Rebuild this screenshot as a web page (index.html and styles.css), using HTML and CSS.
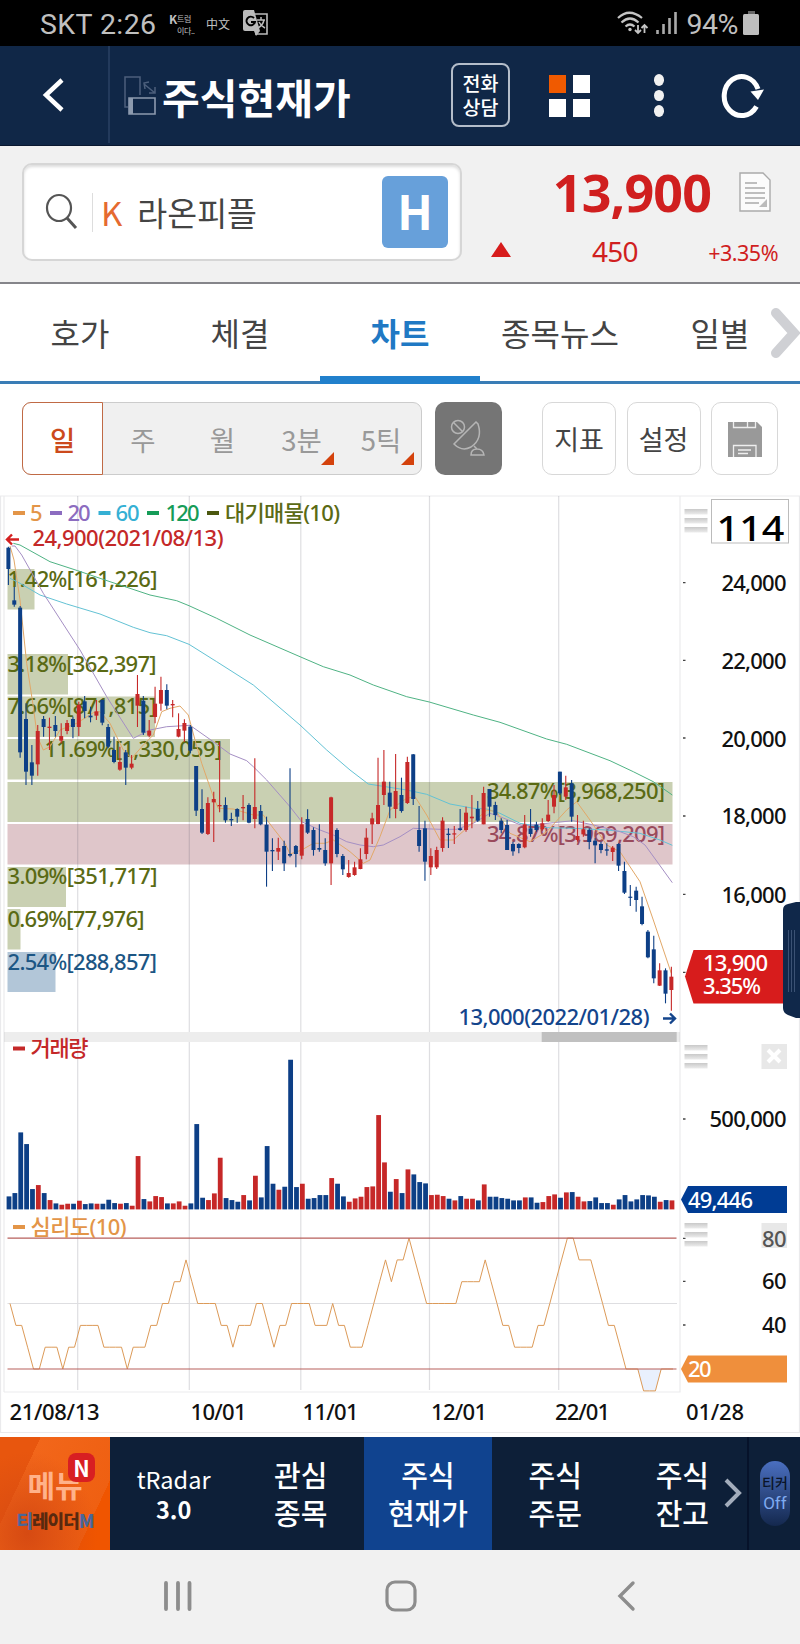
FILE: index.html
```html
<!DOCTYPE html>
<html lang="ko">
<head>
  <meta charset="UTF-8" />
  <meta name="viewport" content="width=device-width, initial-scale=1.0"/>
  <title>주식현재가</title>
  <link rel="stylesheet" href="styles.css">
</head>
<body>
  <div class="status-bar">
    <span class="carrier">SKT 2:26</span>
    <span class="app-mark"><b>K</b><i>트럼<br>이다..</i></span>
    <span class="cn-mark">中文</span>
    <svg class="translate" width="26" height="26" viewBox="0 0 26 26">
      <path d="M12 4h12v20H12" fill="none" stroke="#bbb" stroke-width="1.6"/>
      <path d="M2 0h9l6 21H2a2 2 0 0 1-2-2V2a2 2 0 0 1 2-2z" fill="#bbb"/>
      <path d="M11 21h6l-4 5z" fill="#bbb"/>
      <path d="M11 8a4.3 4.3 0 1 0 1 4H8" fill="none" stroke="#000" stroke-width="1.9"/>
      <path d="M14 10h8M18 7v3M21 10q-1 5-6 8M16 12q2 4 6 6" fill="none" stroke="#bbb" stroke-width="1.5"/>
    </svg>
    <svg class="wifi" width="32" height="25" viewBox="0 0 32 25">
      <g fill="none" stroke="#c4c4c4" stroke-width="2.2">
        <path d="M1 7q11-10.500 24 0"/><path d="M4.500 11.500q8.500-8 17 0"/><path d="M8.500 15.500q4.500-4 9 0"/>
        <path d="M21 14v8m-3-3 3 3 3-3M27.500 22v-8m-3 3 3-3 3 3" stroke-width="1.8"/>
      </g>
      <circle cx="13" cy="18.500" r="1.700" fill="#c4c4c4"/>
    </svg>
    <svg class="signal" width="21" height="23" viewBox="0 0 21 23">
      <path d="M1.500 18v4M7.500 12v10M13.500 6v16M19.500 0v22" stroke="#aaa" stroke-width="2.600"/>
    </svg>
    <span class="battery-text">94%</span>
    <svg width="16" height="25" viewBox="0 0 16 25">
      <rect x="5" y="0" width="7" height="4" fill="#666"/><rect x="0" y="3" width="16" height="21" rx="1.500" fill="#bebebe"/>
    </svg>
  </div>

  <header class="title-bar">
    <div class="back">
      <svg width="22" height="34" viewBox="0 0 22 34"><path d="M20 2 4 17l16 15" fill="none" stroke="#fff" stroke-width="4.500"/></svg>
    </div>
    <svg class="rotate" width="33" height="40" viewBox="0 0 33 40">
      <g fill="none" stroke="#4c5f7c" stroke-width="1.500">
        <path d="M4 31H1V1h15v18"/><path d="m20 8 11 9M25 6l-5 1 1 6M25 17h6v-6"/>
      </g>
      <path d="M5 22h26v16H5z" fill="none" stroke="#8c9aae" stroke-width="1.600"/><path d="M5 22h4v16H5z" fill="#8c9aae"/>
    </svg>
    <h1>주식현재가</h1>
    <div class="call-btn">전화<br>상담</div>
    <div class="tiles"><i class="hot"></i><i></i><i></i><i></i></div>
    <div class="dots"><i></i><i></i><i></i></div>
    <svg class="refresh" width="44" height="46" viewBox="0 0 44 46">
      <path d="M35.500 33.500A17.500 19.500 0 1 1 37 16" fill="none" stroke="#fff" stroke-width="5"/>
      <path d="M29.500 18.500 43 16.500 37 27z" fill="#fff"/>
    </svg>
  </header>

  <section class="stock">
    <div class="search">
      <svg width="34" height="38" viewBox="0 0 34 38"><ellipse cx="14" cy="15" rx="12" ry="13" fill="none" stroke="#555" stroke-width="2.200"/><path d="m22 25 9 10" stroke="#555" stroke-width="3"/></svg>
      <span class="market">K</span>
      <span class="name">라온피플</span>
      <span class="h-btn">H</span>
    </div>
    <div class="quote">
      <div class="quote-top">
        <strong>13,900</strong>
        <svg width="32" height="40" viewBox="0 0 32 40">
          <path d="M1 1h23l7 7v31H1z" fill="#fbfbfb" stroke="#aaa" stroke-width="1.400"/>
          <path d="M6 11h12M6 16h20M6 21h20M6 26h20M6 31h14" stroke="#aaa" stroke-width="1.500"/>
          <path d="M28 27v8h-8z" fill="#bbb"/>
        </svg>
      </div>
      <div class="quote-sub"><i class="up"></i><span class="diff">450</span><span class="rate">+3.35%</span></div>
    </div>
  </section>

  <nav class="tabs">
    <span>호가</span><span>체결</span><span class="on">차트</span><span>종목뉴스</span><span>일별</span>
    <svg width="30" height="52" viewBox="0 0 30 52"><path d="M6 6 24 26 6 46" fill="none" stroke="#cfd0d4" stroke-width="10" stroke-linecap="round"/></svg>
  </nav>

  <div class="toolbar">
    <div class="periods">
      <span class="on">일</span><span>주</span><span>월</span><span class="more">3분</span><span class="more">5틱</span>
    </div>
    <div class="dish">
      <svg width="36" height="38" viewBox="0 0 36 38" fill="none" stroke="#b5b5b5" stroke-width="1.500">
        <circle cx="8" cy="8" r="6.500"/><path d="m3.500 3.500 9 9"/><path d="M26 3 4 25q8 8 17 3 12-8 7-23zM21 36q0-6 6-6t7 6zM24 27l3 3"/>
      </svg>
    </div>
    <div class="tool text">지표</div>
    <div class="tool text">설정</div>
    <div class="tool">
      <svg width="34" height="35" viewBox="0 0 34 35">
        <path d="M0 0h29l5 5v30H0z" fill="#999"/>
        <path d="M5.500 0v5.500h22V0M19.500 0v5.500M5.500 35V23.500h22.500V35" fill="none" stroke="#eee" stroke-width="1.300"/>
        <path d="M10 28h13M10 31.500h10" stroke="#eee" stroke-width="1.300"/>
      </svg>
    </div>
  </div>

  <svg class="chart" width="800" height="942" viewBox="0 495 800 942">
    <defs>
      <g id="grip"><rect width="23" height="5.500"/><rect y="9" width="23" height="5.500"/><rect y="18" width="23" height="5.500"/></g>
      <linearGradient id="gripFill" x2="0" y2="1"><stop stop-color="#c9c9c9"/><stop offset="1" stop-color="#ececec"/></linearGradient>
    </defs>

    <!-- 매물대 -->
    <g fill="#c9d0b2">
      <rect x="7.500" y="569" width="27" height="40.500"/>
      <rect x="7.500" y="654" width="60.500" height="40.500"/>
      <rect x="7.500" y="696.500" width="147.500" height="40.500"/>
      <rect x="7.500" y="739" width="222.500" height="40.500"/>
      <rect x="7.500" y="782" width="665" height="40"/>
      <rect x="7.500" y="867" width="58.500" height="40"/>
      <rect x="7.500" y="909" width="13" height="40.500"/>
    </g>
    <rect x="7.500" y="824" width="665" height="40.500" fill="#dfc6ca"/>
    <rect x="7.500" y="952" width="48" height="40" fill="#b2c6d8"/>

    <!-- 격자 -->
    <rect x="4" y="1032" width="676" height="10" fill="#ededed"/>
    <rect x="541.700" y="1032" width="135" height="10" fill="#c0c0c0"/>
    <g class="grid">
      <path d="M0.500 496V1432.500H799.500V496M4 1392H680V496M4 1392V496M0 496H800"  class="frame"/>
      <path d="M77.700 496V1032M189.300 496V1032M300.800 496V1032M429.500 496V1032M558.700 496V1032"/>
      <path d="M77.700 1042V1390M189.300 1042V1390M300.800 1042V1390M429.500 1042V1390M558.700 1042V1390M7.500 1303.500H677"/>
    </g>

    <g class="label" fill="#5a6a14">
      <text x="7.500" y="586.500" textLength="150">1.42%[161,226]</text>
      <text x="7.500" y="671.700" textLength="149">3.18%[362,397]</text>
      <text x="7.500" y="713.700" textLength="149">7.66%[871,815]</text>
      <text x="44.500" y="756.500" textLength="177.500">11.69%[1,330,059]</text>
      <text x="487" y="799" textLength="178">34.87%[3,968,250]</text>
      <text x="487" y="841.700" textLength="178" fill="#9a4a5c">34.87%[3,969,209]</text>
      <text x="7.500" y="884" textLength="150">3.09%[351,717]</text>
      <text x="7.500" y="926.500" textLength="137">0.69%[77,976]</text>
      <text x="7.500" y="969.500" textLength="149.500" fill="#1c5684">2.54%[288,857]</text>
    </g>

    <g id="lines" class="lines"></g>
    <g id="candles"></g>
    <g id="volume"></g>
    <path d="M637.500 1369l6 21.800h12l6-21.800z" fill="#e9f0fd"/>
    <g id="psy" class="lines"></g>
    <path d="M7.500 1238.200H676.500M7.500 1369H676.500" stroke="#b8605c" stroke-width="1.200"/>

    <!-- 범례 -->
    <g stroke-width="4">
      <path d="M13 513h12" stroke="#e39548"/><path d="M50 513h12" stroke="#8c6cc0"/><path d="M98.500 513h12" stroke="#35b0d4"/>
      <path d="M147 513h12" stroke="#169c58"/><path d="M207 513h12" stroke="#4c5810"/>
      <path d="M13 1048.500h12" stroke="#c42828"/><path d="M13 1227h12" stroke="#e39548"/>
    </g>
    <g class="label">
      <text x="30" y="521" fill="#e39548">5</text>
      <text x="67.500" y="521" textLength="23" fill="#8c6cc0">20</text>
      <text x="115.500" y="521" textLength="24" fill="#35b0d4">60</text>
      <text x="165.500" y="521" textLength="34" fill="#169c58">120</text>
      <text x="225" y="521" textLength="115" fill="#5a6a14">대기매물(10)</text>
      <text x="32.500" y="546" textLength="191" fill="#c42828">24,900(2021/08/13)</text>
      <text x="458.500" y="1025" textLength="191" fill="#14458c">13,000(2022/01/28)</text>
      <text x="30.500" y="1056" textLength="58" fill="#c42828">거래량</text>
      <text x="30.500" y="1235" textLength="96" fill="#e39548">심리도(10)</text>
    </g>
    <path d="M19 539.500H7m5-5-5 5 5 5" fill="none" stroke="#d42020" stroke-width="2.400"/>
    <path d="M663 1018.500h12m-5-5 5 5-5 5" fill="none" stroke="#14458c" stroke-width="2.400"/>

    <!-- 축 -->
    <path d="M683 582.700h2.500M683 660.300h2.500M683 738h2.500M683 816h2.500M683 894.300h2.500M683 972.300h2.500M683 1119h2.500M683 1238.300h2.500M683 1281.300h2.500M683 1325h2.500" stroke="#444" stroke-width="1.300"/>
    <g fill="url(#gripFill)">
      <use href="#grip" x="684.500" y="509"/><use href="#grip" x="684.500" y="1045"/><use href="#grip" x="684.500" y="1223"/>
    </g>
    <rect x="711.500" y="499.500" width="77" height="43.500" fill="#fff" stroke="#bbb"/>
    <text x="716.500" y="541" textLength="68" lengthAdjust="spacingAndGlyphs" class="count">114</text>
    <rect x="761.500" y="1044" width="25.500" height="25" fill="#e8e8e8"/>
    <path d="m768 1050 12 12m0-12-12 12" stroke="#fff" stroke-width="4"/>
    <rect x="761.500" y="1223" width="25.500" height="25" fill="#e8e8e8"/>
    <g class="axis">
      <text x="721.500" y="591" textLength="65">24,000</text>
      <text x="721.500" y="669" textLength="65">22,000</text>
      <text x="721.500" y="746.500" textLength="65">20,000</text>
      <text x="721.500" y="824" textLength="65">18,000</text>
      <text x="721.500" y="902.500" textLength="65">16,000</text>
      <text x="709.500" y="1127" textLength="77">500,000</text>
      <text x="762" y="1246.500" textLength="24.500" fill="#555">80</text>
      <text x="762" y="1289" textLength="24.500">60</text>
      <text x="762" y="1333" textLength="24.500">40</text>
      <text x="9.500" y="1419.500" textLength="90">21/08/13</text>
      <text x="190.500" y="1419.500" textLength="56">10/01</text>
      <text x="302.500" y="1419.500" textLength="56">11/01</text>
      <text x="431" y="1419.500" textLength="56">12/01</text>
      <text x="555" y="1419.500" textLength="55">22/01</text>
      <text x="686" y="1419.500" textLength="58">01/28</text>
    </g>
    <path d="M685 976.500 693.500 950H787v53.500H693.500z" fill="#d71c1c"/>
    <path d="M681 1199.500l7-13.500h99v27H688z" fill="#003c94"/>
    <path d="M681 1369l7-13.500h99v27H688z" fill="#ef8f3c"/>
    <g class="axis tag">
      <text x="703" y="971" textLength="65">13,900</text>
      <text x="703" y="993.500" textLength="58">3.35%</text>
      <text x="688" y="1207.500" textLength="65">49,446</text>
      <text x="688" y="1376.500" textLength="23.500">20</text>
    </g>
    <path d="M783 910q0-5 5-6l8-2h6v116h-6l-8-3q-5-2-5-7z" fill="#10284a"/>
    <path d="M788.500 930v62M791.500 930v62M794.500 930v62" stroke="#3b5274"/>
  </svg>

  <nav class="menu-bar">
    <div class="menu">
      <span class="menu-label">메뉴</span>
      <span class="logo"><b>티</b>레이더<b>M</b></span>
      <span class="new">N</span>
    </div>
    <div class="item small">tRadar<br><b>3.0</b></div>
    <div class="item">관심<br>종목</div>
    <div class="item on">주식<br>현재가</div>
    <div class="item">주식<br>주문</div>
    <div class="item">주식<br>잔고</div>
    <svg class="next" width="20" height="30" viewBox="0 0 20 30"><path d="m2 2 13 13L2 28" fill="none" stroke="#a3adbc" stroke-width="4"/></svg>
    <div class="ticker"><span>티커<br><i>Off</i></span></div>
  </nav>

  <div class="system-nav">
    <svg width="30" height="30" viewBox="0 0 30 30"><path d="M3 2v26M15 2v26M26.500 2v26" stroke="#8d8d8d" stroke-width="3.800" stroke-linecap="round"/></svg>
    <svg width="32" height="32" viewBox="0 0 32 32"><rect x="2" y="2" width="28" height="28" rx="8" fill="none" stroke="#8d8d8d" stroke-width="3.200"/></svg>
    <svg width="20" height="32" viewBox="0 0 20 32"><path d="M17 3 4 16l13 13" fill="none" stroke="#8d8d8d" stroke-width="3.400" stroke-linecap="round"/></svg>
  </div>

  <script src="chart.js"></script>
</body>
</html>
```
FILE: styles.css
```css
* {
  margin: 0;
  padding: 0;
  box-sizing: border-box;
}
body {
  width: 800px;
  background: #fff;
  font-family: "Noto Sans", "Noto Sans CJK KR", sans-serif;
  color: #444;
}
i {
  font-style: normal;
}
svg {
  display: block;
  flex: none;
}

/* 상태 표시줄 */
.status-bar {
  height: 46px;
  padding: 0 41px 0 40px;
  display: flex;
  align-items: center;
  background: #000;
  color: #c0c0c0;
  font-family: Roboto, sans-serif;
}
.carrier {
  width: 129px;
  font-size: 28.500px;
  letter-spacing: 0.400px;
  padding-top: 3px;
}
.app-mark {
  width: 37px;
  display: flex;
  font-family: "Noto Sans CJK KR", sans-serif;
}
.app-mark b {
  width: 8px;
  font-size: 12px;
  line-height: 18px;
}
.app-mark i {
  padding-top: 3px;
  font-size: 8px;
  line-height: 12px;
  white-space: nowrap;
  letter-spacing: -0.400px;
}
.cn-mark {
  width: 37px;
  font: 12px "Noto Sans CJK SC", sans-serif;
}
.wifi {
  margin-left: auto;
}
.signal {
  margin-left: 7px;
}
.battery-text {
  margin: 3px 5px 0 10px;
  font-size: 28.500px;
  letter-spacing: -0.500px;
}

/* 제목 */
.title-bar {
  height: 100px;
  display: flex;
  align-items: center;
  background: #102747;
  color: #fff;
  border-bottom: 1px solid #0a1830;
}
.back {
  width: 110px;
  height: 97px;
  align-self: flex-start;
  padding-left: 42px;
  display: flex;
  align-items: center;
  border-right: 2px solid #233a5c;
}
.rotate {
  margin-left: 14px;
}
h1 {
  width: 289px;
  margin-left: 5px;
  font: bold 41px/60px "Noto Sans CJK KR", sans-serif;
  white-space: nowrap;
}
.call-btn {
  width: 59px;
  height: 64px;
  margin-top: -2px;
  padding-top: 6px;
  border: 2px solid #b4bdca;
  border-radius: 8px;
  font: 500 19.500px/24px "Noto Sans CJK KR", sans-serif;
  text-align: center;
}
.tiles {
  margin-left: 39px;
  display: grid;
  grid-template-columns: 17px 17px;
  gap: 6px 7px;
}
.tiles i {
  height: 18px;
  background: #fff;
}
.tiles .hot {
  background: #f05a00;
}
.dots {
  margin-left: 64px;
  display: grid;
  gap: 4px;
}
.dots i {
  width: 10px;
  height: 11.500px;
  border-radius: 50%;
  background: #f1f1f1;
}
.refresh {
  margin-left: 57px;
}

/* 종목 */
.stock {
  height: 138px;
  display: flex;
  background: #f1f1f1;
  border-bottom: 2px solid #85858a;
}
.search {
  width: 440px;
  height: 98px;
  margin: 17px 0 0 22px;
  padding: 0 12px 0 21px;
  display: flex;
  align-items: center;
  background: #fff;
  border: 2px solid #d6d6d6;
  border-radius: 10px;
  box-shadow: inset 0 2px 3px #ddd;
}
.market {
  margin-left: 13px;
  padding-left: 8px;
  border-left: 1px solid #ddd;
  font: 33px/39px "Noto Sans CJK KR", sans-serif;
  color: #e56a30;
}
.name {
  margin: -1px 0 0 15px;
  font: 32.500px/40px "Noto Sans CJK KR", sans-serif;
}
.h-btn {
  width: 66px;
  height: 72px;
  margin-left: auto;
  border-radius: 6px;
  background: #67a0da;
  color: #fff;
  font: bold 47px/68px "Noto Sans CJK KR", sans-serif;
  text-align: center;
}
.quote {
  flex: 1;
  padding: 12px 22px 0 29px;
  color: #d01f1f;
}
.quote-top {
  height: 68px;
  display: flex;
  justify-content: flex-end;
  align-items: center;
  padding-right: 7px;
}
.quote-top strong {
  margin-right: 28px;
  font-size: 52px;
  line-height: 68px;
  letter-spacing: -0.900px;
}
.quote-sub {
  display: flex;
  height: 50px;
  align-items: center;
}
.up {
  border: 10px solid transparent;
  border-top: 0;
  border-bottom: 15px solid #d71c1c;
  margin-top: -3px;
}
.diff {
  margin-left: 81px;
  font-size: 28px;
  letter-spacing: -0.800px;
}
.rate {
  margin: 2px 0 0 auto;
  font-size: 21.500px;
  letter-spacing: -0.500px;
}

/* 탭 */
.tabs {
  height: 100px;
  display: flex;
  background: #fff;
  box-shadow: inset 0 -3px #3a7db6;
}
.tabs span {
  width: 160px;
  padding-top: 26px;
  font: 32px/44px "Noto Sans CJK KR", sans-serif;
  text-align: center;
}
.tabs .on {
  color: #2079c4;
  font-weight: 700;
  border-bottom: 8px solid #2180cc;
}
.tabs svg {
  margin: 23px 0 0 -30px;
}

/* 차트 도구 */
.toolbar {
  height: 111px;
  padding: 18px 22px 0;
  display: flex;
}
.periods {
  width: 400px;
  height: 73px;
  display: flex;
  border-radius: 9px;
  border: 1px solid #ccc;
  background: #f0f0f0;
}
.periods span {
  flex: 1;
  position: relative;
  font: 27.500px/72px "Noto Sans CJK KR", sans-serif;
  text-align: center;
  color: #999;
}
.periods .on {
  margin: -1px 0 -1px -1px;
  border: 1px solid #c06a45;
  border-radius: 9px 0 0 9px;
  background: #fff;
  color: #cc4a1c;
  font-weight: 500;
}
.more::after {
  content: "";
  position: absolute;
  right: 7px;
  bottom: 9px;
  border-left: 13px solid transparent;
  border-bottom: 13px solid #d4420c;
}
.dish {
  width: 67px;
  height: 73px;
  margin: 0 40px 0 13.500px;
  padding: 17px 15px;
  border-radius: 10px;
  background: #757575;
}
.tool {
  width: 67px;
  height: 73px;
  padding: 19px 16px;
  border: 1.500px solid #d8d8d8;
  border-radius: 10px;
}
.tool.text {
  width: 74px;
  margin-right: 10.500px;
  padding: 0;
  font: 27px/71px "Noto Sans CJK KR", sans-serif;
  text-align: center;
}

/* 차트 */
.chart {
  font-family: "Noto Sans", "Noto Sans CJK KR", sans-serif;
}
.grid path {
  fill: none;
  stroke: #505060;
  stroke-opacity: 0.190;
  stroke-width: 1.200;
}
.grid .frame {
  stroke-opacity: 0.120;
}
.label {
  font-size: 22px;
  font-weight: 500;
}
.axis {
  font-size: 22px;
  font-weight: 500;
  fill: #111;
}
.tag {
  fill: #fff;
}
.count {
  font-size: 34px;
  font-weight: 500;
  fill: #000;
}
.lines path {
  fill: none;
  stroke-width: 1;
}

/* 하단 메뉴 */
.menu-bar {
  height: 113px;
  display: flex;
  background: #0d1f38;
}
.menu {
  width: 110px;
  position: relative;
  padding-top: 24px;
  display: flex;
  flex-direction: column;
  align-items: center;
  background: radial-gradient(at 25% 85%, #d64a12, transparent 60%), linear-gradient(115deg, #e8560e 25%, #f2661a 25%, #ef6012 80%, #f05500 80%);
}
.menu-label {
  font: bold 30px/46px "Noto Sans CJK KR", sans-serif;
  color: #ffb28a;
}
.logo {
  font: 900 18px/27px "Noto Sans CJK KR", sans-serif;
  letter-spacing: -1px;
  color: #58290f;
  white-space: nowrap;
}
.logo b {
  color: #48669a;
}
.new {
  position: absolute;
  left: 68px;
  top: 16px;
  width: 27px;
  height: 29px;
  border-radius: 8px;
  background: #d81f22;
  color: #fff;
  font: bold 22px/29px "Noto Sans CJK KR", sans-serif;
  text-align: center;
}
.item {
  width: 127.200px;
  padding-top: 18px;
  font: 500 29px/38px "Noto Sans CJK KR", sans-serif;
  text-align: center;
  color: #fff;
}
.item.small {
  padding-top: 27px;
  font-size: 23.500px;
  font-weight: 400;
  line-height: 30px;
}
.item b {
  font-weight: 700;
}
.item.on {
  background: #10438f;
}
.next {
  margin: 41px 0 0 -22px;
}
.ticker {
  flex: 1;
  margin-left: 3px;
  padding: 24px 0 0 11px;
  border-left: 2px solid #06122a;
}
.ticker span {
  display: block;
  width: 30px;
  height: 65px;
  padding-top: 11px;
  border-radius: 15px;
  background: linear-gradient(#4a6fc0, #14284e);
  font: 500 14px/21px "Noto Sans CJK KR", sans-serif;
  text-align: center;
  color: #0a1428;
}
.ticker i {
  font-family: Roboto, sans-serif;
  font-size: 17px;
  font-weight: 400;
  color: #7faaf0;
}
.system-nav {
  height: 94px;
  padding: 0 164px 3px 163px;
  display: grid;
  grid-template-columns: 222px 1fr auto;
  align-items: center;
  background: #f1f1f1;
}
```
FILE: chart.js
```js
const RED = '#c62828', BLUE = '#0d3f86';
const px = i => 8.4 + 5.867 * i;
const py = v => 490 + v / 3;

// 고가, 몸통 위, 몸통 아래, 저가 (1/3 px)
const candles = `B170,173,237,285 B290,331,344,350 B348,353,787,803 B640,687,845,885 B765,817,857,885 R705,723,823,857
B678,687,711,740 R683,710,714,780 B678,705,723,740 R700,738,752,760 R690,699,723,733 B680,687,711,745
R635,645,711,738 B618,634,663,685 B650,677,682,697 R630,664,677,690 B628,630,698,706 B702,711,770,775
B740,780,816,820 R770,816,839,842 B780,787,833,885 R795,821,833,838 R555,612,647,711 B618,632,728,735
R690,722,737,742 R590,641,681,700 R560,600,641,662 B583,600,647,658 R630,642,646,682 R670,717,740,742
R688,699,722,755 B705,710,782,790 B828,828,962,978 B898,957,1028,1032 R922,939,1032,1035 R905,927,937,1056
R755,945,949,967 B922,945,991,998 B968,987,991,1008 B955,957,980,998 R915,951,955,991 B940,945,998,1000
R805,951,987,1015 B945,963,1003,1006 B980,1004,1085,1190 B1045,1080,1084,1143 R1043,1074,1085,1110 B1052,1068,1120,1143
B835,1092,1097,1102 B1065,1068,1092,1132 R982,1003,1097,1108 B958,987,1028,1032 B1012,1020,1080,1097 B1003,1074,1079,1085
B1045,1080,1120,1127 R920,922,1120,1185 B1015,1020,1092,1102 B1092,1098,1138,1155 R1110,1149,1161,1163 R1115,1132,1155,1157
R1075,1108,1137,1138 R1015,1043,1092,1108 R968,985,1003,1062 R803,945,1002,1003 R780,875,915,945 B875,908,950,985
R792,903,957,985 B863,915,963,968 R800,816,939,942 B792,793,927,945 B948,1020,1068,1085 B992,1015,1115,1172
R1075,1098,1132,1155 R1070,1080,1132,1137 R982,992,1074,1085 B1015,1031,1035,1074 R1008,1030,1033,1062 B957,1015,1020,1022
R950,968,1020,1025 R915,980,985,1015 B933,957,992,996 R890,909,1003,1003 B897,897,950,980 B935,945,975,990
B985,992,1020,1030 B990,1005,1080,1080 B1055,1062,1084,1097 B1060,1062,1074,1090 R975,1003,1072,1075 B957,1015,1032,1040
B995,1004,1020,1025 R985,1000,1018,1022 R930,974,993,996 R885,915,950,970 B845,845,910,915 R857,892,920,930
B870,880,980,995 R975,1038,1050,1055 R992,1018,1033,1040 B1015,1020,1056,1078 B1045,1052,1066,1120 B1055,1062,1080,1090
B1060,1078,1082,1097 R1068,1073,1086,1113 B1060,1062,1127,1143 B1115,1143,1208,1212 B1185,1220,1222,1248 B1190,1202,1230,1265
B1220,1249,1302,1306 B1320,1325,1402,1405 B1337,1378,1465,1480 R1420,1441,1487,1488 B1435,1441,1511,1540 R1430,1460,1500,1562`
  .split(/\s+/).map(s => [s[0] === 'R' ? RED : BLUE, ...s.slice(1).split(',').map(Number)]);

const volume = [39,49,231,196,61,73,49,28,18,14,17,17,26,16,18,17,17,29,19,17,19,11,160,31,24,40,37,18,18,24,11,18,256,35,28,48,155,34,28,23,
  43,27,101,36,190,77,59,68,449,67,77,32,34,43,43,94,77,39,23,33,38,67,69,283,141,53,91,49,120,105,82,78,43,44,40,32,27,40,32,32,
  27,75,38,38,34,32,27,27,36,36,20,22,40,45,35,51,52,38,24,25,36,19,19,14,30,43,24,30,43,42,38,23,28,27];

const psy = [50,40,40,30,20,20,30,30,30,20,30,30,40,40,40,40,30,30,30,30,20,30,30,30,40,40,50,50,60,60,70,60,50,50,50,50,40,40,30,40,
  40,40,50,50,40,30,40,40,50,50,50,50,40,40,40,50,40,40,30,30,30,40,50,60,70,60,70,70,80,70,60,50,50,50,50,50,50,60,60,60,
  60,70,60,50,40,40,30,30,30,30,40,40,50,60,70,80,80,70,70,70,60,50,40,40,30,20,20,20,10,10,10,20,20,20];

// 이동평균선
const averages = [
  ['#4fb384', '40,160 60,165 150,215 233,242 330,275 450,315 530,332 567,347 650,385 750,435 900,500 970,530 1050,555 1120,585 1220,620 1288,636 1420,675 1500,697 1640,747 1700,763 1830,812 1900,845 1960,875 2017,915'],
  ['#63c2d4', '30,265 60,280 120,315 200,342 300,372 400,412 450,428 500,437 567,463 650,515 760,585 900,705 980,780 1050,840 1105,882 1220,900 1280,913 1350,942 1420,955 1460,957 1500,970 1560,1000 1640,1013 1720,1015 1820,1020 1920,1030 1980,1050 2017,1066'],
  ['#a58fc4', '35,168 45,168 65,195 130,310 240,480 320,620 400,745 450,720 500,710 570,706 640,755 690,792 740,812 760,830 800,870 870,950 905,995 960,1020 1000,1035 1040,1055 1080,1065 1120,1070 1150,1065 1200,1040 1240,1015 1320,1018 1370,1018 1420,1000 1470,970 1500,980 1570,1008 1660,998 1720,992 1780,1005 1860,1025 1900,1040 1935,1065 1975,1120 2017,1178'],
  ['#e2a868', '30,168 42,210 60,330 80,520 100,650 112,740 130,780 150,770 180,720 230,700 280,668 300,665 330,700 370,780 395,805 430,765 460,735 485,665 510,655 540,648 565,675 585,750 605,820 640,920 655,955 700,957 760,975 790,975 820,1015 855,1060 870,1092 905,1080 940,1060 975,1060 1000,1050 1040,1078 1050,1085 1090,1120 1110,1110 1140,1040 1170,960 1220,925 1245,920 1280,975 1320,1050 1360,1050 1400,1015 1460,960 1490,965 1530,1030 1590,1055 1640,1025 1700,960 1730,935 1770,990 1820,1065 1860,1085 1920,1175 1960,1290 2014,1450']
];

document.getElementById('lines').innerHTML = averages.map(([color, pts]) => {
  const d = pts.split(' ').map(p => {
    const [x, y] = p.split(',').map(Number);
    return (x / 3).toFixed(1) + ' ' + py(y).toFixed(1);
  });
  return `<path d="M${d.join('L')}" stroke="${color}"/>`;
}).join('');

document.getElementById('candles').innerHTML = candles.map(([color, hi, top, bottom, lo], i) => {
  const x = px(i);
  return `<path d="M${x} ${py(hi)}V${py(lo)}" stroke="${color}" stroke-width="1.1"/>` +
    `<rect x="${x - 2}" y="${py(top)}" width="4" height="${Math.max((bottom - top) / 3, 1.2)}" fill="${color}"/>`;
}).join('');

document.getElementById('volume').innerHTML = volume.map((v, i) =>
  `<rect x="${px(i) - 1.8}" y="${1209.4 - v / 3}" width="4.8" height="${v / 3}" fill="${candles[i][0]}"/>`
).join('');

document.getElementById('psy').innerHTML = '<path stroke="#dc9a58" d="M' +
  psy.map((v, i) => (px(i) + 1.6).toFixed(1) + ' ' + (1412.7 - v * 2.183).toFixed(1)).join('L') + '"/>';
```
